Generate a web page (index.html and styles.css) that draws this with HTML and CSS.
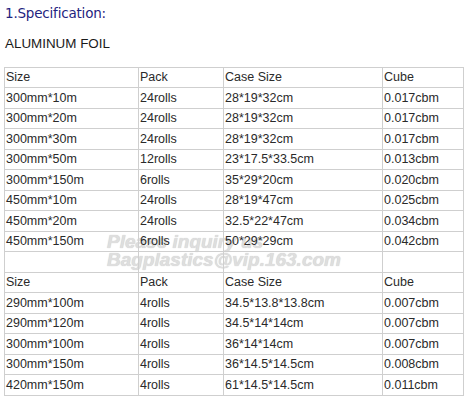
FILE: index.html
```html
<!DOCTYPE html>
<html>
<head>
<meta charset="utf-8">
<link rel="stylesheet" href="styles.css">
</head>
<body>
<div class="page">
  <div class="title">1.Specification:</div>
  <div class="subtitle">ALUMINUM FOIL</div>
  <div class="table-wrap">
    <div class="watermark">Please inquiry us<br>Bagplastics@vip.163.com</div>
    <table class="spec">
      <colgroup>
        <col class="c1"><col class="c2"><col class="c3"><col class="c4">
      </colgroup>
      <tr><td>Size</td><td>Pack</td><td>Case Size</td><td>Cube</td></tr>
      <tr><td>300mm*10m</td><td>24rolls</td><td>28*19*32cm</td><td>0.017cbm</td></tr>
      <tr><td>300mm*20m</td><td>24rolls</td><td>28*19*32cm</td><td>0.017cbm</td></tr>
      <tr><td>300mm*30m</td><td>24rolls</td><td>28*19*32cm</td><td>0.017cbm</td></tr>
      <tr><td>300mm*50m</td><td>12rolls</td><td>23*17.5*33.5cm</td><td>0.013cbm</td></tr>
      <tr><td>300mm*150m</td><td>6rolls</td><td>35*29*20cm</td><td>0.020cbm</td></tr>
      <tr><td>450mm*10m</td><td>24rolls</td><td>28*19*47cm</td><td>0.025cbm</td></tr>
      <tr><td>450mm*20m</td><td>24rolls</td><td>32.5*22*47cm</td><td>0.034cbm</td></tr>
      <tr><td>450mm*150m</td><td>6rolls</td><td>50*29*29cm</td><td>0.042cbm</td></tr>
      <tr><td></td><td></td><td></td><td></td></tr>
      <tr><td>Size</td><td>Pack</td><td>Case Size</td><td>Cube</td></tr>
      <tr><td>290mm*100m</td><td>4rolls</td><td>34.5*13.8*13.8cm</td><td>0.007cbm</td></tr>
      <tr><td>290mm*120m</td><td>4rolls</td><td>34.5*14*14cm</td><td>0.007cbm</td></tr>
      <tr><td>300mm*100m</td><td>4rolls</td><td>36*14*14cm</td><td>0.007cbm</td></tr>
      <tr><td>300mm*150m</td><td>4rolls</td><td>36*14.5*14.5cm</td><td>0.008cbm</td></tr>
      <tr><td>420mm*150m</td><td>4rolls</td><td>61*14.5*14.5cm</td><td>0.011cbm</td></tr>
    </table>
  </div>
</div>
</body>
</html>
```

FILE: styles.css
```css
html, body {
  margin: 0;
  padding: 0;
  background: #ffffff;
}
.page {
  padding: 5px 0 0 4px;
  width: 460px;
}
.title {
  font-family: "DejaVu Sans", sans-serif;
  font-size: 13.5px;
  line-height: 16px;
  color: #1f2480;
  padding-left: 1px;
  letter-spacing: -0.2px;
}
.subtitle {
  margin-top: 15px;
  font-family: "Liberation Sans", Arial, sans-serif;
  font-size: 13.4px;
  line-height: 16px;
  color: #1a1a1a;
  padding-left: 1px;
}
.table-wrap {
  position: relative;
  margin-top: 14.5px;
}
.spec {
  position: relative;
  border-collapse: collapse;
  table-layout: fixed;
  width: 459px;
  font-family: "Liberation Sans", Arial, sans-serif;
  font-size: 12.5px;
  color: #2a2a2a;
}
.c1 { width: 134px; }
.c2 { width: 85px; }
.c3 { width: 159px; }
.c4 { width: 81px; }
.spec td {
  border: 1px solid #cfcfcf;
  height: 19.5px;
  padding: 0 0 0 1px;
  line-height: 14px;
  vertical-align: middle;
  white-space: nowrap;
}
.watermark {
  position: absolute;
  left: 103px;
  top: 166px;
  font-family: "Liberation Sans", Arial, sans-serif;
  font-weight: bold;
  font-style: italic;
  font-size: 19px;
  line-height: 18px;
  color: #dedede;
  text-shadow: 0 0 1px #c4c4c4;
  white-space: nowrap;
}
```
